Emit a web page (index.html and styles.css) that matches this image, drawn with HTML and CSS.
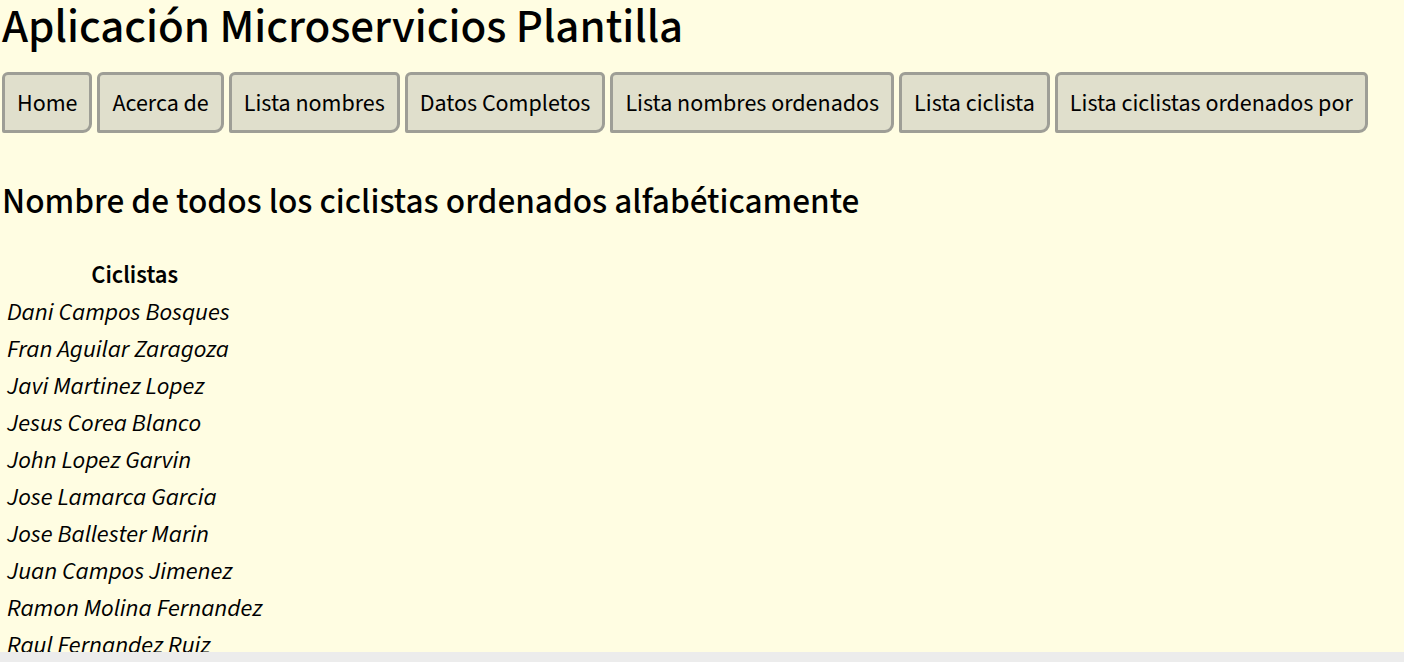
FILE: index.html
```html
<!DOCTYPE html>
<html lang="es">
<head>
<meta charset="utf-8">
<title>Aplicación Microservicios Plantilla</title>
<link rel="stylesheet" href="styles.css">
</head>
<body>
<div class="page">
  <h1 class="title">Aplicación Microservicios Plantilla</h1>
  <nav class="nav">
    <a class="btn" href="#">Home</a>
    <a class="btn" href="#">Acerca de</a>
    <a class="btn" href="#">Lista nombres</a>
    <a class="btn" href="#">Datos Completos</a>
    <a class="btn" href="#">Lista nombres ordenados</a>
    <a class="btn" href="#">Lista ciclista</a>
    <a class="btn" href="#">Lista ciclistas ordenados por</a>
  </nav>
  <h2 class="subtitle">Nombre de todos los ciclistas ordenados alfabéticamente</h2>
  <table class="list">
    <thead><tr><th>Ciclistas</th></tr></thead>
    <tbody>
      <tr><td>Dani Campos Bosques</td></tr>
      <tr><td>Fran Aguilar Zaragoza</td></tr>
      <tr><td>Javi Martinez Lopez</td></tr>
      <tr><td>Jesus Corea Blanco</td></tr>
      <tr><td>John Lopez Garvin</td></tr>
      <tr><td>Jose Lamarca Garcia</td></tr>
      <tr><td>Jose Ballester Marin</td></tr>
      <tr><td>Juan Campos Jimenez</td></tr>
      <tr><td>Ramon Molina Fernandez</td></tr>
      <tr><td>Raul Fernandez Ruiz</td></tr>
      <tr><td>Sergio Ruiz Perez</td></tr>
    </tbody>
  </table>
</div>
</body>
</html>
```
FILE: styles.css
```css
html {
  background: #ececec;
}
body {
  margin: 0;
  font-family: "Source Sans 3", "Source Sans Pro", Lato, sans-serif;
  color: #000;
}
.page {
  height: calc(100vh - 10px);
  overflow: hidden;
  background: #fffde2;
  padding: 0 2px;
  box-sizing: border-box;
}
.title {
  margin: 0;
  font-size: 47.3px;
  font-weight: 500;
  line-height: 56px;
}
.nav {
  display: flex;
  gap: 5px;
  margin-top: 16px;
}
.btn {
  display: flex;
  align-items: center;
  height: 61px;
  box-sizing: border-box;
  padding: 1px 12px 0;
  background: #e0dfcc;
  border: 3px solid #9e9e96;
  border-radius: 6px 5px 9px 2px;
  color: #000;
  text-decoration: none;
  font-size: 24px;
  white-space: nowrap;
}
.subtitle {
  margin: 49px 0 0;
  font-size: 35.5px;
  font-weight: 500;
  line-height: 40px;
}
.list {
  margin-top: 34px;
  margin-left: 2px;
  border-spacing: 2px;
  font-size: 24.6px;
}
.list th {
  padding: 1px;
  line-height: 33px;
  font-weight: 600;
  text-align: center;
}
.list td {
  padding: 1px;
  line-height: 33px;
  font-style: italic;
  white-space: nowrap;
}
```
